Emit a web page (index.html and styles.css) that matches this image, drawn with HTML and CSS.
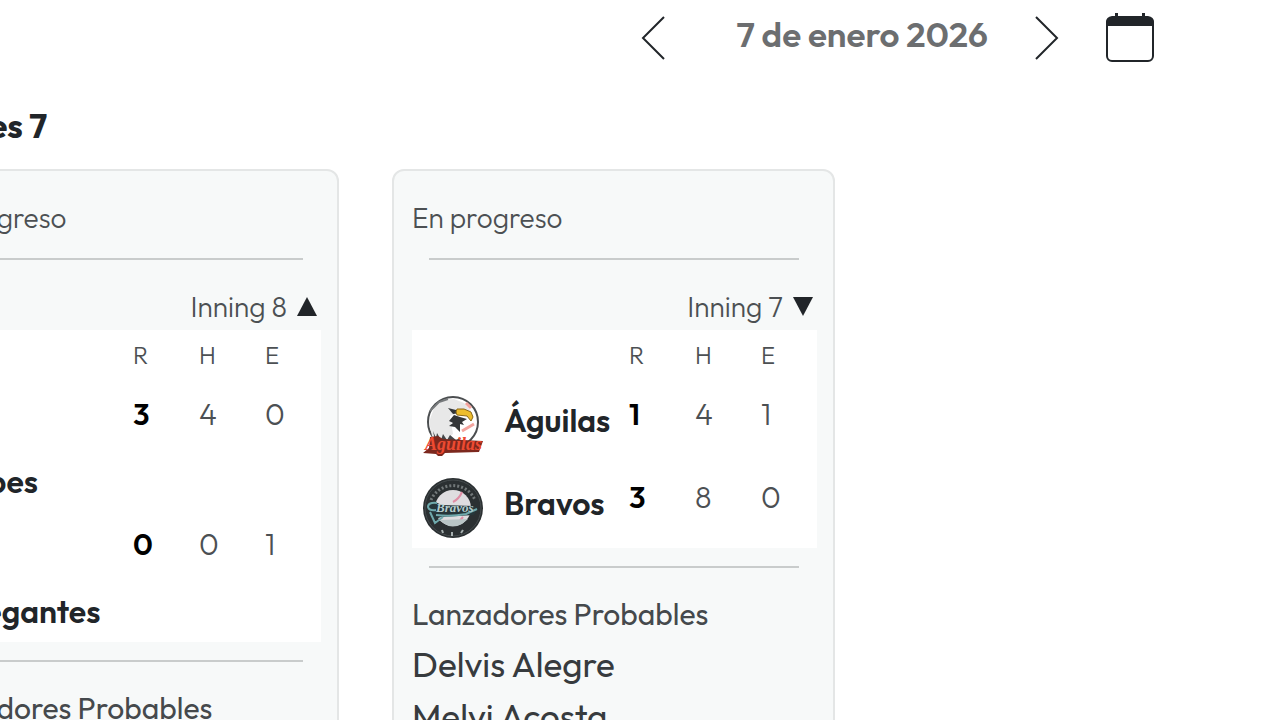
FILE: index.html
```html
<!DOCTYPE html>
<html lang="es">
<head>
<meta charset="utf-8">
<meta name="viewport" content="width=device-width, initial-scale=1">
<title>Juegos del día</title>
<link rel="stylesheet" href="styles.css">
</head>
<body>
<header class="date-nav">
  <button class="icon-button" type="button" aria-label="Día anterior">
    <svg width="24" height="44" viewBox="0 0 24 44"><path d="M23 1 2 22l21 21"/></svg>
  </button>
  <span class="date">7 de enero 2026</span>
  <button class="icon-button" type="button" aria-label="Día siguiente">
    <svg width="24" height="44" viewBox="0 0 24 44"><path d="m1 1 21 21L1 43"/></svg>
  </button>
  <button class="icon-button calendar" type="button" aria-label="Abrir calendario">
    <svg width="48" height="50" viewBox="0 0 48 50"><rect x="1" y="5" width="46" height="43" rx="5"/><path class="solid" d="M0 13V9q0-5 6-6h3V0h3v3h24V0h3v3h3q6 1 6 6v4Z"/></svg>
  </button>
</header>
<main class="schedule">
  <h2 class="day">Miércoles 7</h2>
  <div class="games">
    <article class="game stacked">
      <p class="status">En progreso</p>
      <hr>
      <p class="inning">Inning 8 <svg width="20" height="20" viewBox="0 0 20 20"><path d="M10 0 20 19H0Z"/></svg></p>
      <table class="score">
        <thead><tr><td></td><th scope="col">R</th><th scope="col">H</th><th scope="col">E</th></tr></thead>
        <tbody>
          <tr><th scope="row"><span class="team"><span class="logo"></span>Caribes</span></th><td class="runs">3</td><td>4</td><td>0</td></tr>
          <tr><th scope="row"><span class="team"><span class="logo"></span>Navegantes</span></th><td class="runs">0</td><td>0</td><td>1</td></tr>
        </tbody>
      </table>
      <hr>
      <h3 class="pitchers-title">Lanzadores Probables</h3>
    </article>
    <article class="game">
      <p class="status">En progreso</p>
      <hr>
      <p class="inning">Inning 7 <svg width="20" height="20" viewBox="0 0 20 20"><path d="M0 0h20L10 19Z"/></svg></p>
      <table class="score">
        <thead><tr><td></td><th scope="col">R</th><th scope="col">H</th><th scope="col">E</th></tr></thead>
        <tbody>
          <tr>
            <th scope="row"><span class="team">
              <svg class="logo" viewBox="0 0 62 62" aria-hidden="true">
                <circle cx="31" cy="28" r="25" fill="#fff" stroke="#4b4e50" stroke-width="2"/>
                <path d="M10 42 7 28l5-14 9-8 11-1 10 4 7 8-13 2-8 3 3 18-6 5H12Z" fill="#e8e8e8"/>
                <path d="m8 17 9-9 9-3" fill="none" stroke="#777a7c" stroke-width="2"/>
                <path d="m11 37 3 7 1-5 4 7 2-6 4 6 3-5 6 5 4-2v3H13Z" fill="#45484a"/>
                <path d="m27 27 5-6 6 2 7 2-5 3 2 3-4-1 0 8-5-5-6-1 4-3Z" fill="#343638"/>
                <path d="m26 14 8 2 5 3-8 1Z" fill="#333638"/>
                <path d="m35 15 7 0 7 3 2 5-2 4-4-5-10-1-1-3Z" fill="#edbd2c" stroke="#8c6919"/>
                <path d="m40 37 12-7M44 9l5 5" fill="none" stroke="#f3a49e" stroke-width="3"/>
                <path d="m8 43 8-1 5 3 40 2-4 11-34 1-5 5-4-4-13-1 6-5Z" fill="#7c281e"/>
                <text x="3" y="56" font-family="Liberation Serif, serif" font-size="18" font-weight="700" font-style="italic" fill="#ee4a31">Aguilas</text>
              </svg>Águilas</span></th>
            <td class="runs">1</td><td>4</td><td>1</td>
          </tr>
          <tr>
            <th scope="row"><span class="team">
              <svg class="logo" viewBox="0 0 62 62" aria-hidden="true">
                <circle cx="31" cy="31" r="30" fill="#2b3032"/>
                <circle cx="31" cy="31" r="28" fill="none" stroke="#454b4d"/>
                <path d="M9 23a24 24 0 0 1 44 0" fill="none" stroke="#727879" stroke-width="3" stroke-dasharray="2 2"/>
                <circle cx="31" cy="31" r="18" fill="#dfdde0"/>
                <path d="M40 15q-3 7-9 10m10 15-5 6" fill="none" stroke="#e08da5" stroke-width="2"/>
                <path d="m5 28 8-3 7 3 32 1 4 2-4 7-33 2-8 3Z" fill="#26363a"/>
                <path d="M15 26q-9-1-9 4 1 4 8 3m0 5q15 2 30-1l11-5M8 35l5 11 8-6" fill="none" stroke="#6fa9ac" stroke-width="2"/>
                <text x="14" y="35" font-family="Liberation Serif, serif" font-size="13" font-weight="700" font-style="italic" fill="#b5cccd">Bravos</text>
                <path d="m17 43 29-1-6 5q-10 5-17 0Z" fill="#b9c5c6"/>
                <path d="m20 53 1 3m9-1v4m11-6-2 3" stroke="#a7b0b0" stroke-width="2"/>
              </svg>Bravos</span></th>
            <td class="runs">3</td><td>8</td><td>0</td>
          </tr>
        </tbody>
      </table>
      <hr>
      <h3 class="pitchers-title">Lanzadores Probables</h3>
      <p class="pitcher">Delvis Alegre</p>
      <p class="pitcher">Melvi Acosta</p>
    </article>
  </div>
</main>
</body>
</html>
```
FILE: styles.css
```css
* { box-sizing: border-box; }
body {
  margin: 0;
  height: 100vh;
  overflow: hidden;
  background: #fff;
  color: #212529;
  font-family: Outfit, Lato, "Open Sans", sans-serif;
}
.date-nav {
  display: flex;
  justify-content: flex-end;
  align-items: center;
  gap: 47px;
  height: 76px;
  padding-right: 126px;
}
.date {
  min-width: 274px;
  padding-left: 24px;
  padding-bottom: 8px;
  color: #6c6e70;
  font-size: 35px;
  font-weight: 600;
  line-height: 42px;
  text-align: center;
  white-space: nowrap;
}
.icon-button {
  display: flex;
  padding: 0;
  border: 0;
  background: none;
}
.icon-button svg {
  fill: none;
  stroke: #212529;
  stroke-width: 2;
}
.icon-button .solid { fill: #212529; stroke: none; }
.schedule { margin: 0 -51px 0 -127px; }
.day {
  margin: 0;
  padding: 27px 0 21px;
  font-size: 34px;
  font-weight: 700;
  line-height: 45px;
}
.games {
  display: grid;
  grid-template-columns: repeat(3, 1fr);
  align-items: start;
  gap: 53px;
  padding-left: 23px;
}
.game {
  padding: 25px 16px 24px 18px;
  border: 2px solid #e4e6e6;
  border-radius: 12px;
  background: #f7f9f9;
}
.game hr {
  height: 2px;
  margin: 18px 18px 18px 17px;
  border: 0;
  background: #c9cccc;
}
.status, .inning {
  margin: 0;
  color: #4c5053;
  font-size: 28px;
  font-weight: 300;
  line-height: 44px;
}
.inning {
  display: flex;
  justify-content: flex-end;
  align-items: center;
  gap: 10px;
  padding: 7px 4px 1px 0;
}
.inning svg { fill: #212529; }
.score {
  width: 100%;
  border-collapse: collapse;
  table-layout: fixed;
  background: #fff;
}
.score td, .score th {
  width: 66px;
  padding: 12px 0 9px 10px;
  color: #4c5053;
  font-size: 30px;
  font-weight: 300;
  line-height: 40px;
  text-align: left;
  vertical-align: top;
}
.score thead td, .score thead th {
  height: 52px;
  padding: 0 0 2px 10px;
  font-size: 24px;
  font-weight: 300;
  line-height: 50px;
}
.score td:first-child, .score th:first-child { width: auto; }
.score .runs { color: #000; font-weight: 600; }
.score .team {
  display: flex;
  align-items: flex-start;
  gap: 20px;
  color: #212529;
  font-size: 32px;
  font-weight: 600;
  line-height: 52px;
}
.logo { flex: none; width: 62px; height: 62px; }
.stacked .score .team {
  flex-direction: column;
  gap: 4px;
  line-height: 43px;
}
.pitchers-title {
  margin: 0;
  padding-top: 4px;
  color: #45494c;
  font-size: 30px;
  font-weight: 400;
  line-height: 48px;
}
.pitcher {
  margin: 0;
  color: #373b3e;
  font-size: 35px;
  font-weight: 400;
  line-height: 52px;
}
```
